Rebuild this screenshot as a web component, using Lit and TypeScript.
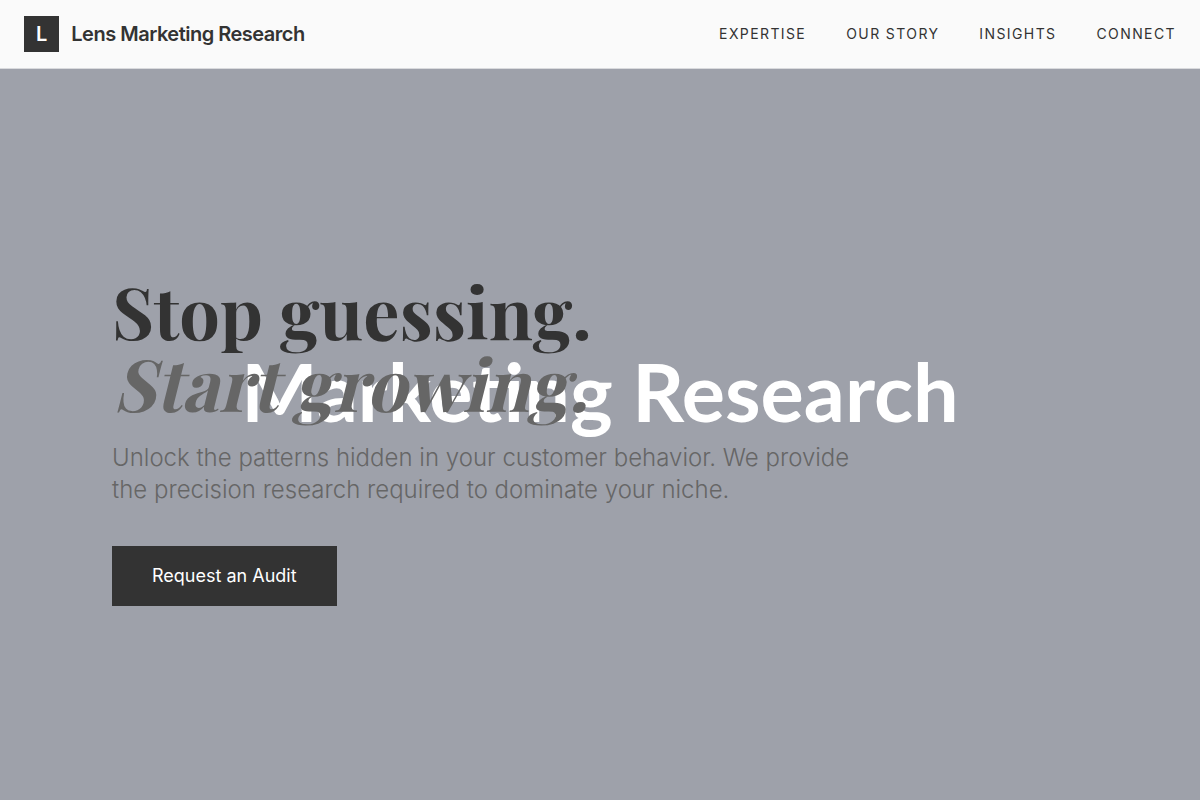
import { LitElement, html, css } from "lit";
import { customElement } from "lit/decorators.js";

const NAV = ["Expertise", "Our Story", "Insights", "Connect"];

@customElement("app-root")
export class AppRoot extends LitElement {
  static styles = css`
    :host {
      display: block;
      font-family: Inter, "Liberation Sans", sans-serif;
      color: #333;
      background: #fafafa;
    }
    .page {
      display: flex;
      flex-direction: column;
      min-height: 100vh;
    }
    .header {
      display: flex;
      align-items: center;
      justify-content: space-between;
      padding: 16px 24px;
      background: #fafafa;
      border-bottom: 1px solid #d9dadd;
    }
    .brand {
      display: flex;
      align-items: center;
      gap: 12px;
      color: inherit;
      text-decoration: none;
      font-size: 20px;
      line-height: 28px;
      font-weight: 600;
    }
    .mark {
      padding: 4px 12px;
      background: #333;
      color: #fff;
    }
    .name {
      letter-spacing: -0.5px;
    }
    .nav {
      display: flex;
      gap: 40px;
    }
    .link {
      color: inherit;
      text-decoration: none;
      text-transform: uppercase;
      font-size: 14px;
      line-height: 20px;
      letter-spacing: 1.4px;
    }
    .hero {
      flex: 1;
      display: grid;
      align-items: center;
      background: #9ea1aa;
    }
    .backdrop,
    .inner {
      grid-area: 1 / 1;
    }
    .backdrop {
      padding-bottom: 88px;
      text-align: center;
      font-family: Lato, sans-serif;
      font-weight: 700;
      font-size: 81px;
      line-height: 96px;
      color: #fff;
    }
    .inner {
      box-sizing: border-box;
      width: 100%;
      max-width: 1024px;
      margin: 0 auto;
      padding: 10px 24px 0;
      z-index: 1;
    }
    .title {
      margin: 0 0 24px;
      font-family: "Playfair Display", "Liberation Serif", serif;
      font-weight: 700;
      font-size: 72px;
      line-height: 72px;
    }
    .accent {
      display: block;
      font-style: normal;
      transform: skewX(-14deg);
      transform-origin: left bottom;
      color: #666;
    }
    .lead {
      max-width: 768px;
      margin: 0 0 40px;
      font-size: 24px;
      line-height: 32px;
      font-weight: 300;
      color: #666;
    }
    .cta {
      border: 0;
      padding: 16px 40px;
      background: #333;
      color: #fff;
      font-family: inherit;
      font-size: 18px;
      line-height: 28px;
      font-weight: 400;
      cursor: pointer;
    }
  `;

  render() {
    return html`
      <div class="page">
        <header class="header">
          <a class="brand" href="#">
            <span class="mark">L</span>
            <span class="name">Lens Marketing Research</span>
          </a>
          <nav class="nav">
            ${NAV.map((label) => html`<a class="link" href="#">${label}</a>`)}
          </nav>
        </header>
        <main class="hero">
          <div class="backdrop">Marketing Research</div>
          <div class="inner">
            <h1 class="title">Stop guessing. <em class="accent">Start growing.</em></h1>
            <p class="lead">
              Unlock the patterns hidden in your customer behavior. We provide
              the precision research required to dominate your niche.
            </p>
            <button class="cta" type="button">Request an Audit</button>
          </div>
        </main>
      </div>
    `;
  }
}
